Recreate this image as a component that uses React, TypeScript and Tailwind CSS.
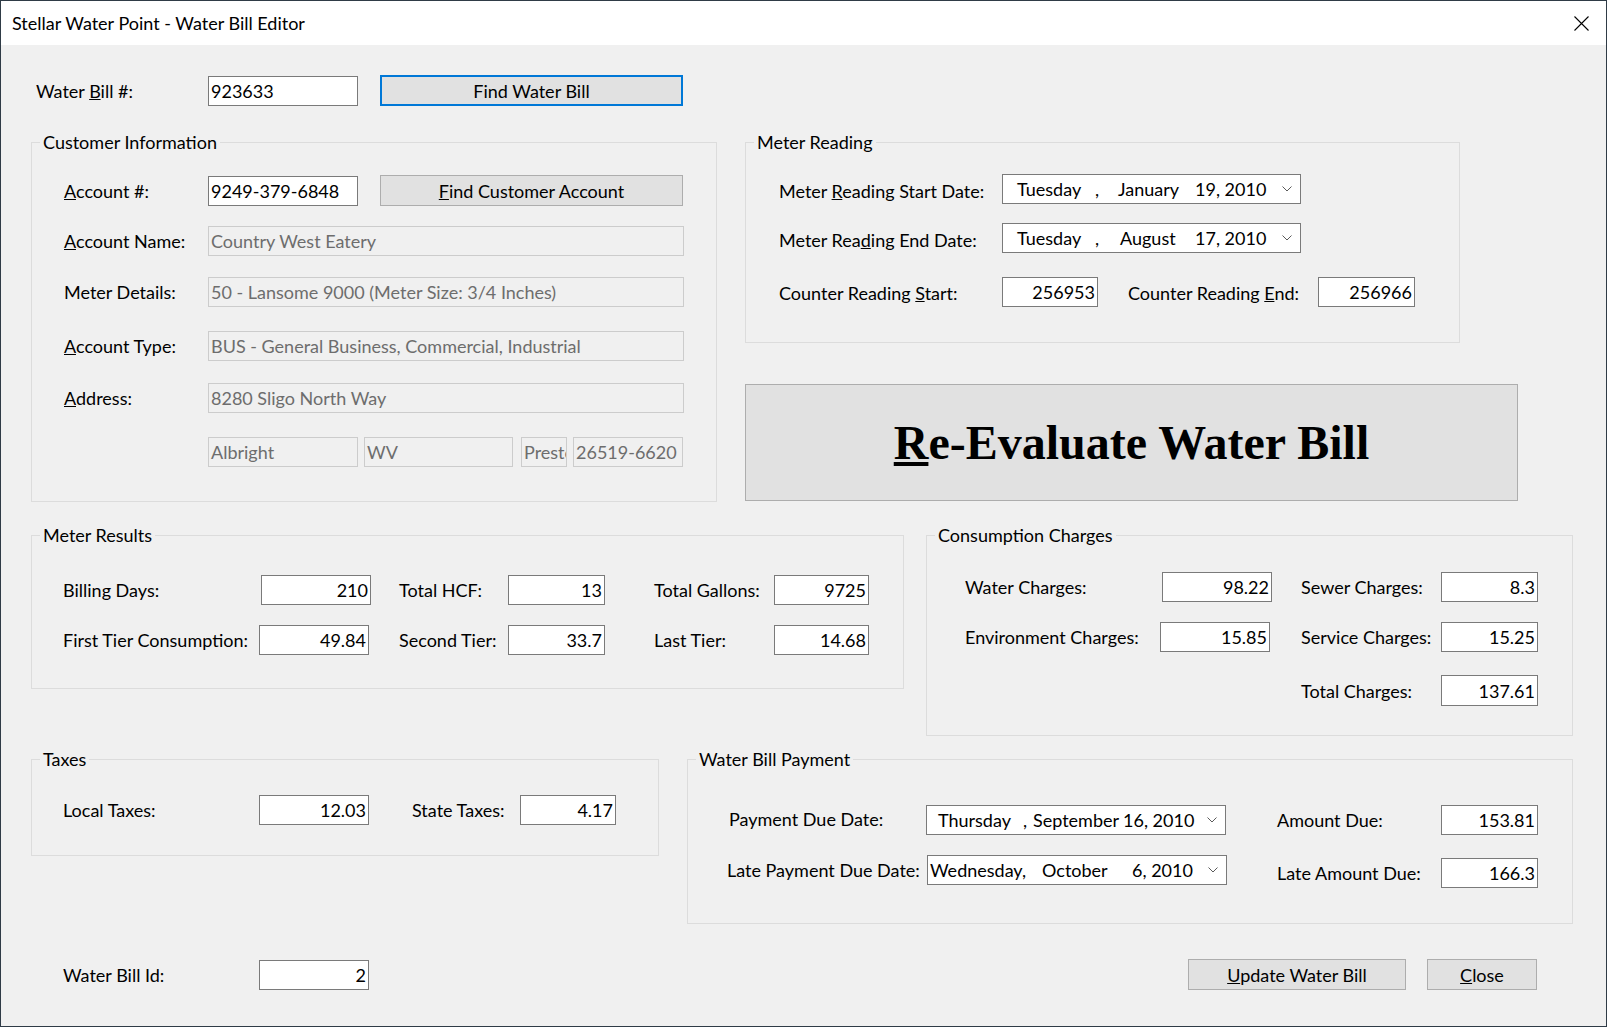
import React from "react";

type Kids = { children?: React.ReactNode };

function Label({ w, children, cls = "" }: { w: string; cls?: string } & Kids) {
  return <span className={`${w} ${cls} shrink-0 whitespace-nowrap`}>{children}</span>;
}

function Box({
  w,
  children,
  right = false,
  disabled = false,
  h = "h-[30px]",
  cls = "",
}: { w: string; right?: boolean; disabled?: boolean; h?: string; cls?: string } & Kids) {
  const base = disabled
    ? "border-[#cccccc] bg-[#f0f0f0] text-[#6d6d6d]"
    : "border-[#7a7a7a] bg-white text-black";
  return (
    <div
      className={`${w} ${h} ${base} ${cls} shrink-0 border flex items-center overflow-hidden whitespace-nowrap ${
        right ? "justify-end pr-[2px]" : "pl-[2px]"
      }`}
    >
      {children}
    </div>
  );
}

function Btn({ w, h, focus = false, cls = "", children }: { w: string; h: string; focus?: boolean; cls?: string } & Kids) {
  return (
    <div
      className={`${w} ${h} ${cls} shrink-0 flex items-center justify-center bg-[#e1e1e1] whitespace-nowrap ${
        focus ? "border-2 border-[#0078d7]" : "border border-[#adadad]"
      }`}
    >
      {children}
    </div>
  );
}

function Chevron() {
  return (
    <svg width="10" height="6" viewBox="0 0 10 6" className="mr-[8px] shrink-0">
      <polyline points="0.5,0.5 5,5 9.5,0.5" fill="none" stroke="#5a5a5a" strokeWidth="1" />
    </svg>
  );
}

function DatePicker({ w, pl, children }: { w: string; pl: string } & Kids) {
  return (
    <div className={`${w} h-[30px] shrink-0 border border-[#7a7a7a] bg-white flex items-center whitespace-nowrap`}>
      <div className={`flex flex-1 ${pl}`}>{children}</div>
      <Chevron />
    </div>
  );
}

function Group({ title, cls, children }: { title: string; cls: string } & Kids) {
  return (
    <fieldset className={`${cls} shrink-0 border border-[#dcdcdc] p-0 m-0 min-w-0`}>
      <legend className="ml-[8px] px-[3px] h-[24px] leading-[24px]">{title}</legend>
      {children}
    </fieldset>
  );
}

export default function App() {
  return (
    <div className="w-[1607px] h-[1027px] border border-[#2f3b46] bg-[#f0f0f0] font-['Lato','Segoe_UI',sans-serif] text-[18px] leading-[24px] text-black flex flex-col overflow-hidden">
      {/* Title bar */}
      <div className="h-[44px] shrink-0 bg-white flex items-center justify-between pl-[11px] pr-[17px]">
        <span>Stellar Water Point - Water Bill Editor</span>
        <svg width="15" height="15" viewBox="0 0 15 15">
          <path d="M0.5 0.5 L14.5 14.5 M14.5 0.5 L0.5 14.5" stroke="#000" strokeWidth="1.1" fill="none" />
        </svg>
      </div>

      {/* Water bill # row */}
      <div className="mt-[30px] h-[31px] flex items-center pl-[35px]">
        <Label w="w-[172px]">
          Water <u>B</u>ill #:
        </Label>
        <Box w="w-[150px]">923633</Box>
        <Btn w="w-[303px]" h="h-[31px]" focus cls="ml-[22px]">
          Find Water Bill
        </Btn>
      </div>

      {/* Customer info + meter reading */}
      <div className="mt-[24px] flex items-start pl-[30px]">
        <Group title="Customer Information" cls="w-[686px] h-[372px]">
          <div className="mt-[21px] h-[31px] flex items-center pl-[32px]">
            <Label w="w-[144px]">
              <u>A</u>ccount #:
            </Label>
            <Box w="w-[150px]">9249-379-6848</Box>
            <Btn w="w-[303px]" h="h-[31px]" cls="ml-[22px]">
              <span>
                <u>F</u>ind Customer Account
              </span>
            </Btn>
          </div>
          <div className="mt-[20px] h-[30px] flex items-center pl-[32px]">
            <Label w="w-[144px]">
              <u>A</u>ccount Name:
            </Label>
            <Box w="w-[476px]" disabled>
              Country West Eatery
            </Box>
          </div>
          <div className="mt-[21px] h-[30px] flex items-center pl-[32px]">
            <Label w="w-[144px]">Meter Details:</Label>
            <Box w="w-[476px]" disabled>
              50 - Lansome 9000 (Meter Size: 3/4 Inches)
            </Box>
          </div>
          <div className="mt-[24px] h-[30px] flex items-center pl-[32px]">
            <Label w="w-[144px]">
              <u>A</u>ccount Type:
            </Label>
            <Box w="w-[476px]" disabled>
              BUS - General Business, Commercial, Industrial
            </Box>
          </div>
          <div className="mt-[22px] h-[30px] flex items-center pl-[32px]">
            <Label w="w-[144px]">
              <u>A</u>ddress:
            </Label>
            <Box w="w-[476px]" disabled>
              8280 Sligo North Way
            </Box>
          </div>
          <div className="mt-[24px] h-[30px] flex items-center pl-[176px]">
            <Box w="w-[150px]" disabled>
              Albright
            </Box>
            <Box w="w-[149px]" disabled cls="ml-[6px]">
              WV
            </Box>
            <Box w="w-[46px]" disabled cls="ml-[8px]">
              <span className="block w-full overflow-hidden">Preston</span>
            </Box>
            <Box w="w-[110px]" disabled cls="ml-[6px]">
              26519-6620
            </Box>
          </div>
        </Group>

        <div className="ml-[28px] w-[773px] flex flex-col shrink-0">
          <Group title="Meter Reading" cls="w-[715px] h-[213px]">
            <div className="mt-[20px] h-[30px] flex items-center pl-[33px]">
              <Label w="w-[223px]" cls="pt-[3px]">
                Meter <u>R</u>eading Start Date:
              </Label>
              <DatePicker w="w-[299px]" pl="pl-[14px]">
                <span className="w-[78px] shrink-0">Tuesday</span>
                <span className="w-[23px] shrink-0">,</span>
                <span className="w-[77px] shrink-0">January</span>
                <span>19, 2010</span>
              </DatePicker>
            </div>
            <div className="mt-[19px] h-[30px] flex items-center pl-[33px]">
              <Label w="w-[223px]" cls="pt-[3px]">
                Meter Rea<u>d</u>ing End Date:
              </Label>
              <DatePicker w="w-[299px]" pl="pl-[14px]">
                <span className="w-[78px] shrink-0">Tuesday</span>
                <span className="w-[25px] shrink-0">,</span>
                <span className="w-[75px] shrink-0">August</span>
                <span>17, 2010</span>
              </DatePicker>
            </div>
            <div className="mt-[24px] h-[30px] flex items-center pl-[33px]">
              <Label w="w-[223px]" cls="pt-[2px]">
                Counter Reading <u>S</u>tart:
              </Label>
              <Box w="w-[96px]" right>
                256953
              </Box>
              <Label w="w-[190px]" cls="ml-[30px] pt-[2px]">
                Counter Reading <u>E</u>nd:
              </Label>
              <Box w="w-[97px]" right>
                256966
              </Box>
            </div>
          </Group>
          <Btn w="w-[773px]" h="h-[117px]" cls="mt-[41px]">
            <span className="font-['Liberation_Serif','Times_New_Roman',serif] font-bold text-[48px] leading-[56px]">
              <u>R</u>e-Evaluate Water Bill
            </span>
          </Btn>
        </div>
      </div>

      {/* Meter results + consumption charges */}
      <div className="mt-[21px] flex items-start pl-[30px]">
        <Group title="Meter Results" cls="w-[873px] h-[166px]">
          <div className="mt-[28px] h-[30px] flex items-center pl-[31px]">
            <Label w="w-[198px]">Billing Days:</Label>
            <Box w="w-[110px]" right>
              210
            </Box>
            <Label w="w-[109px]" cls="ml-[28px]">
              Total HCF:
            </Label>
            <Box w="w-[97px]" right>
              13
            </Box>
            <Label w="w-[120px]" cls="ml-[49px]">
              Total Gallons:
            </Label>
            <Box w="w-[95px]" right>
              9725
            </Box>
          </div>
          <div className="mt-[20px] h-[30px] flex items-center pl-[31px]">
            <Label w="w-[196px]">First Tier Consumption:</Label>
            <Box w="w-[110px]" right>
              49.84
            </Box>
            <Label w="w-[109px]" cls="ml-[30px]">
              Second Tier:
            </Label>
            <Box w="w-[97px]" right>
              33.7
            </Box>
            <Label w="w-[120px]" cls="ml-[49px]">
              Last Tier:
            </Label>
            <Box w="w-[95px]" right>
              14.68
            </Box>
          </div>
        </Group>

        <Group title="Consumption Charges" cls="ml-[22px] w-[647px] h-[213px]">
          <div className="mt-[25px] h-[30px] flex items-center pl-[38px]">
            <Label w="w-[197px]">Water Charges:</Label>
            <Box w="w-[110px]" right>
              98.22
            </Box>
            <Label w="w-[140px]" cls="ml-[29px]">
              Sewer Charges:
            </Label>
            <Box w="w-[97px]" right>
              8.3
            </Box>
          </div>
          <div className="mt-[20px] h-[30px] flex items-center pl-[38px]">
            <Label w="w-[195px]">Environment Charges:</Label>
            <Box w="w-[110px]" right>
              15.85
            </Box>
            <Label w="w-[140px]" cls="ml-[31px]">
              Service Charges:
            </Label>
            <Box w="w-[97px]" right>
              15.25
            </Box>
          </div>
          <div className="mt-[23px] h-[31px] flex items-center pl-[374px]">
            <Label w="w-[140px]">Total Charges:</Label>
            <Box w="w-[97px]" h="h-[31px]" right>
              137.61
            </Box>
          </div>
        </Group>
      </div>

      {/* Taxes + payment */}
      <div className="mt-[11px] flex items-start pl-[30px]">
        <Group title="Taxes" cls="w-[628px] h-[109px]">
          <div className="mt-[24px] h-[30px] flex items-center pl-[31px]">
            <Label w="w-[196px]">Local Taxes:</Label>
            <Box w="w-[110px]" right>
              12.03
            </Box>
            <Label w="w-[108px]" cls="ml-[43px]">
              State Taxes:
            </Label>
            <Box w="w-[96px]" right>
              4.17
            </Box>
          </div>
        </Group>

        <Group title="Water Bill Payment" cls="ml-[28px] w-[886px] h-[177px]">
          <div className="mt-[34px] h-[30px] flex items-center pl-[41px]">
            <Label w="w-[197px]" cls="pb-[3px]">
              Payment Due Date:
            </Label>
            <DatePicker w="w-[300px]" pl="pl-[11px]">
              <span className="w-[85px] shrink-0">Thursday</span>
              <span className="w-[10px] shrink-0">,</span>
              <span className="w-[90px] shrink-0">September</span>
              <span>16, 2010</span>
            </DatePicker>
            <Label w="w-[164px]" cls="ml-[51px]">
              Amount Due:
            </Label>
            <Box w="w-[97px]" right>
              153.81
            </Box>
          </div>
          <div className="mt-[20px] flex items-start pl-[39px]">
            <div className="w-[200px] h-[30px] shrink-0 flex items-center whitespace-nowrap">Late Payment Due Date:</div>
            <DatePicker w="w-[300px]" pl="pl-[2px]">
              <span className="w-[112px] shrink-0">Wednesday,</span>
              <span className="w-[90px] shrink-0">October</span>
              <span>6, 2010</span>
            </DatePicker>
            <div className="ml-[50px] mt-[3px] h-[30px] flex items-center">
              <Label w="w-[164px]">Late Amount Due:</Label>
              <Box w="w-[97px]" right>
                166.3
              </Box>
            </div>
          </div>
        </Group>
      </div>

      {/* Bottom row */}
      <div className="mt-[35px] h-[31px] flex items-center pl-[62px]">
        <Label w="w-[196px]">Water Bill Id:</Label>
        <Box w="w-[110px]" right>
          2
        </Box>
        <Btn w="w-[218px]" h="h-[31px]" cls="ml-[819px]">
          <span>
            <u>U</u>pdate Water Bill
          </span>
        </Btn>
        <Btn w="w-[110px]" h="h-[31px]" cls="ml-[21px]">
          <span>
            <u>C</u>lose
          </span>
        </Btn>
      </div>
    </div>
  );
}
